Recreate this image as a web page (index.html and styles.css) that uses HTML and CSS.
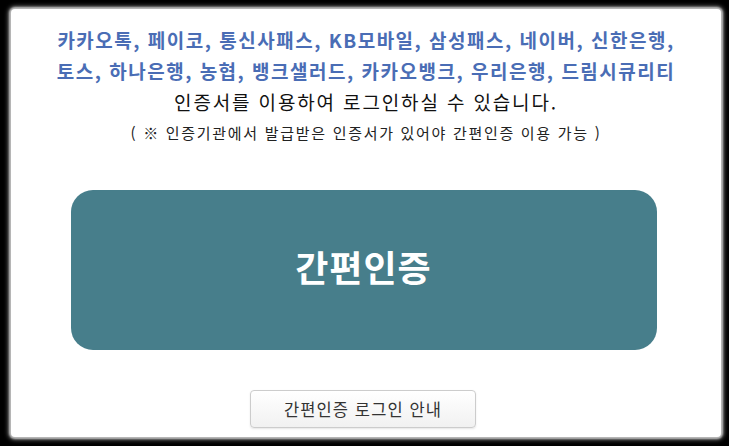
FILE: index.html
```html
<!DOCTYPE html>
<html lang="ko">
<head>
<meta charset="utf-8">
<link rel="stylesheet" href="styles.css">
</head>
<body>
<div class="card">
  <div class="intro">
    <p class="providers">카카오톡, 페이코, 통신사패스, KB모바일, 삼성패스, 네이버, 신한은행,<br>토스, 하나은행, 농협, 뱅크샐러드, 카카오뱅크, 우리은행, 드림시큐리티</p>
    <p class="lead">인증서를 이용하여 로그인하실 수 있습니다.</p>
    <p class="note">( ※ 인증기관에서 발급받은 인증서가 있어야 간편인증 이용 가능 )</p>
  </div>
  <button class="main-btn" type="button">간편인증</button>
  <button class="guide-btn" type="button">간편인증 로그인 안내</button>
</div>
</body>
</html>
```

FILE: styles.css
```css
html, body {
  margin: 0;
  padding: 0;
  background: #000;
  height: 100%;
}
body {
  padding: 9px 8px 9px 11px;
  box-sizing: border-box;
  font-family: "Noto Sans CJK KR", "Noto Sans", sans-serif;
}
.card {
  background: #fff;
  height: 428px;
  border-radius: 4px;
  box-shadow: 0 0 2px 2px #bbb, 0 0 4px 3px #666;
  display: flex;
  flex-direction: column;
  align-items: center;
  box-sizing: border-box;
  padding-top: 15px;
}
.intro {
  text-align: center;
}
.intro p {
  margin: 0;
}
.providers {
  color: #4a6db5;
  font-weight: bold;
  font-size: 19px;
  line-height: 31px;
  letter-spacing: 1.5px;
}
.lead {
  color: #111;
  font-size: 19px;
  line-height: 32px;
  letter-spacing: 1.85px;
}
.note {
  color: #222;
  font-size: 15px;
  line-height: 30px;
  letter-spacing: 1.7px;
}
.main-btn {
  margin-top: 42px;
  width: 586px;
  height: 160px;
  background: #477e8b;
  border: none;
  border-radius: 22px;
  color: #fff;
  font-family: inherit;
  font-weight: bold;
  font-size: 36px;
  letter-spacing: 1px;
  padding: 0 0 8px 0;
  margin-left: -5px;
}
.guide-btn {
  margin-top: 40px;
  width: 226px;
  height: 38px;
  margin-left: -6px;
  background: linear-gradient(#fff, #f1f1f1);
  border: 1px solid #ccc;
  border-radius: 4px;
  box-shadow: 0 1px 2px rgba(0,0,0,0.1);
  color: #333;
  font-family: inherit;
  font-size: 16.5px;
  letter-spacing: 1.1px;
  padding: 0;
}
```
